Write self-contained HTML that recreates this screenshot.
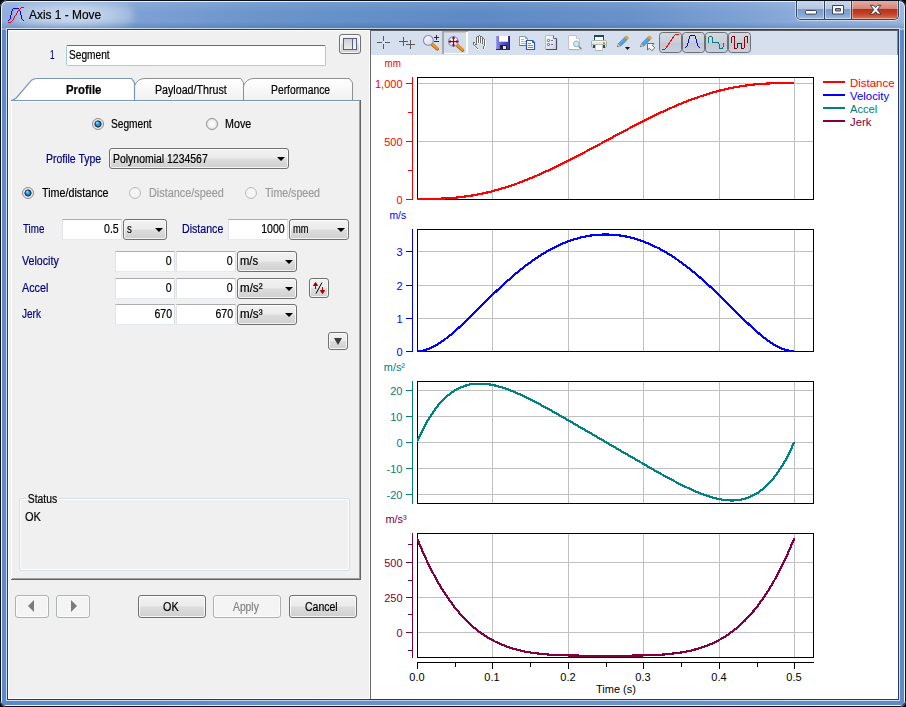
<!DOCTYPE html>
<html><head><meta charset="utf-8"><title>Axis 1 - Move</title>
<style>
*{box-sizing:border-box;margin:0;padding:0}
html,body{width:906px;height:707px;overflow:hidden;background:#000}
body{font-family:"Liberation Sans",sans-serif;font-size:11px;color:#000;position:relative}
.abs,.abs>*{position:absolute}
#frame{position:absolute;left:0;top:0;width:906px;height:707px;border-radius:7px 7px 6px 6px;
 background:linear-gradient(90deg,#93aedb 0,#88a8d7 5%,#7ca0d3 16%,#6c95cc 28%,#6590c8 38%,#5f8ac5 52%,#648ec7 62%,#6992ca 70%,#7ea2d4 82%,#90afdc 90%,#9ab7e0 100%);overflow:hidden}
#frame:before{content:"";position:absolute;left:1px;top:1px;right:1px;bottom:1px;border:1px solid rgba(255,255,255,.85);border-radius:6px 6px 5px 5px}
#frame:after{content:"";position:absolute;left:0;top:0;right:0;bottom:0;border:1px solid #0a0f1c;border-radius:7px 7px 6px 6px}
#sideL,#sideR,#sideB{position:absolute;background:#5d8ac8}
#glow{position:absolute;left:14px;top:2px;width:120px;height:26px;border-radius:13px;background:radial-gradient(ellipse at center,rgba(255,255,255,.62) 0,rgba(255,255,255,.45) 45%,rgba(255,255,255,0) 100%);filter:blur(3px)}
#title{position:absolute;left:29px;top:7px;font-size:14.5px;color:#000;letter-spacing:-0.1px;white-space:nowrap}
#client{position:absolute;left:8px;top:30px;width:890px;height:669px;background:#f0f0f0}
#cborder{position:absolute;left:6px;top:28px;width:894px;height:673px;border:1px solid rgba(255,255,255,.58)}
#cborder2{position:absolute;left:7px;top:29px;width:892px;height:671px;border:1px solid #2b3a57}
.lbl{position:absolute;color:#00007f;white-space:nowrap;line-height:13px}
.blk{color:#000}
.dis{color:#9d9d9d}
.tb{position:absolute;height:21px;background:#fff;border:1px solid #e3e9ef;border-top-color:#abadb3;border-left-color:#e2e3ea;border-right-color:#dbdfe6;text-align:right;padding:2px 3px 0 0;line-height:13px}
.cb{position:absolute;height:21px;border:1px solid #707070;border-radius:3px;background:linear-gradient(#f2f2f2 0,#ebebeb 48%,#dddddd 52%,#cfcfcf 100%);box-shadow:inset 0 0 0 1px rgba(255,255,255,.75);padding:3px 0 0 4px;line-height:13px}
.cb i{position:absolute;right:3px;top:8px;width:0;height:0;border-left:4px solid transparent;border-right:4px solid transparent;border-top:4px solid #000}
.btn{position:absolute;height:23px;border:1px solid #707070;border-radius:3px;background:linear-gradient(#f2f2f2 0,#ebebeb 48%,#dddddd 52%,#cfcfcf 100%);box-shadow:inset 0 0 0 1px rgba(255,255,255,.8);text-align:center;font-size:12px;line-height:20px}
.btn.d{border-color:#adb2b5;background:#f4f4f4;color:#838383;box-shadow:inset 0 0 0 1px #fcfcfc}
.radio{position:absolute;width:12px;height:12px;border-radius:50%;border:1px solid #8a8b8b;background:radial-gradient(circle at 50% 50%,#fefefe 0,#f3f3f3 45%,#d9dadb 100%);box-shadow:inset 0 0 0 1px #ededed}
.radio.on{background:radial-gradient(circle at 42% 38%,rgba(190,240,253,.95) 0,rgba(190,240,253,0) 1.9px),radial-gradient(circle at 50% 50%,#2fa8e8 0,#2290d2 1.6px,#1a5f96 2.3px,#143a5e 2.9px,#143a5e 3.3px,rgba(20,58,94,0) 3.9px),radial-gradient(circle at 50% 50%,#fefefe 0,#f3f3f3 45%,#d9dadb 100%)}
.radio.off{border-color:#bcbcbc;background:#f6f6f6;box-shadow:inset 0 0 0 1px #efefef}
.ct{font-family:"Liberation Sans",sans-serif;font-size:11px}
</style></head><body>
<div id="frame">
 <div style="position:absolute;left:2px;top:2px;right:2px;height:26px;background:linear-gradient(rgba(255,255,255,.10) 0,rgba(255,255,255,0) 40%,rgba(20,60,120,0) 75%,rgba(20,70,130,.22) 100%)"></div>
 <div style="position:absolute;left:2px;top:30px;width:4px;bottom:2px;background:#5d8ac8"></div><div style="position:absolute;right:2px;top:30px;width:4px;bottom:2px;background:#5d8ac8"></div><div style="position:absolute;left:2px;bottom:2px;right:2px;height:4px;background:linear-gradient(90deg,#5b89c7,#6a95ce 60%,#5d8ac8)"></div>
 <div id="glow"></div>
 <svg style="position:absolute;left:0;top:0" width="32" height="30" viewBox="0 0 32 30" shape-rendering="crispEdges"><g fill="#0000ff"><rect x="8" y="20" width="1" height="1"/><rect x="9" y="19" width="1" height="1"/><rect x="10" y="15" width="1" height="4"/><rect x="11" y="11" width="1" height="4"/><rect x="12" y="9" width="1" height="2"/><rect x="13" y="8" width="6" height="1"/><rect x="19" y="9" width="1" height="2"/><rect x="20" y="11" width="1" height="4"/><rect x="21" y="15" width="1" height="4"/><rect x="22" y="19" width="1" height="1"/><rect x="23" y="20" width="1" height="1"/></g><g fill="#ff0000"><rect x="8" y="22" width="3" height="1"/><rect x="11" y="21" width="1" height="1"/><rect x="12" y="20" width="1" height="1"/><rect x="13" y="18" width="1" height="2"/><rect x="14" y="16" width="1" height="2"/><rect x="15" y="15" width="1" height="1"/><rect x="16" y="13" width="1" height="2"/><rect x="17" y="11" width="1" height="2"/><rect x="18" y="10" width="1" height="1"/><rect x="19" y="9" width="1" height="1"/><rect x="20" y="8" width="1" height="1"/><rect x="21" y="7" width="3" height="1"/></g></svg>
 
 <!-- caption buttons -->
 <div style="position:absolute;left:796px;top:0;width:103px;height:20px;border:1px solid #36445e;border-top:none;border-radius:0 0 5px 5px;overflow:hidden;box-shadow:0 0 0 1px rgba(255,255,255,.5)">
  <div style="position:absolute;left:0;top:0;width:28px;height:19px;background:linear-gradient(#cbd9ed 0,#b3c6e2 47%,#7c9ccb 50%,#83a4d2 75%,#9dbde6 100%);border-right:1px solid #36445e;box-shadow:inset 0 0 0 1px rgba(255,255,255,.45)"></div>
  <div style="position:absolute;left:28px;top:0;width:27px;height:19px;background:linear-gradient(#cbd9ed 0,#b3c6e2 47%,#7c9ccb 50%,#83a4d2 75%,#9dbde6 100%);border-right:1px solid #36445e;box-shadow:inset 0 0 0 1px rgba(255,255,255,.45)"></div>
  <div style="position:absolute;left:55px;top:0;width:46px;height:19px;background:linear-gradient(#e6b3aa 0,#d48474 47%,#b8301b 50%,#c4442b 75%,#d9785a 100%);box-shadow:inset 0 0 0 1px rgba(255,255,255,.4)"></div>
  <svg style="position:absolute;left:0;top:0" width="101" height="19" viewBox="797 0 101 19">
   <rect x="805.5" y="10.5" width="11" height="3.6" rx="0.8" fill="#fff" stroke="#3e4658" stroke-width="1"/>
   <path d="M832.5 5.5 H843.5 V14 H832.5Z M835.5 8.5 V11 H840.5 V8.5Z" fill="#fff" fill-rule="evenodd" stroke="#3e4658" stroke-width="1"/>
   <path d="M870.3 5.3 L873.6 5.3 L875.6 7.6 L877.6 5.3 L880.9 5.3 L877.4 9.7 L881 14.1 L877.6 14.1 L875.6 11.8 L873.6 14.1 L870.2 14.1 L873.8 9.7 Z" fill="#fff" stroke="#3f3f48" stroke-width="1" stroke-linejoin="round"/>
  </svg>
 </div>
 <div id="cborder"></div><div id="cborder2"></div>
</div>
<div id="client">
<!-- LEFT PANEL (coords relative to client: subtract 8,30) -->
<div id="left" class="abs" style="left:0;top:0;width:362px;height:669px">
 <div style="left:58px;top:15px;width:260px;height:21px;background:#fff;border:1px solid #a7cbe6;border-top-color:#3d7bad;border-radius:2px"></div>
 <!-- layout button -->
 <div style="left:331px;top:4px;width:22px;height:20px;border:1px solid #707070;border-radius:3px;background:linear-gradient(#f2f2f2 0,#ebebeb 48%,#dddddd 52%,#cfcfcf 100%);box-shadow:inset 0 0 0 1px rgba(255,255,255,.8)"></div>
 <div style="left:335px;top:8px;width:14px;height:12px;border:1px solid #5a6084;background:linear-gradient(#cfcfcf,#ececec)"></div>
 <div style="left:344px;top:9px;width:1px;height:10px;background:#5a6084"></div>
 <div style="left:345px;top:9px;width:3px;height:10px;background:linear-gradient(#e2e2e2,#f6f6f6)"></div>

 <!-- tabs -->
 <svg style="left:0;top:44px" width="362" height="30" viewBox="8 74 362 30">
  <defs><linearGradient id="utab" x1="0" y1="0" x2="0" y2="1"><stop offset="0" stop-color="#ffffff"/><stop offset="1" stop-color="#f1f1f1"/></linearGradient></defs>
  <path d="M243.5 100.5 L243.5 85.8 Q246.5 78.5 254 78.5 L349.5 78.5 L352.5 82.6 L352.5 100.5Z" fill="url(#utab)" stroke="#8f8f8f" stroke-width="1"/>
  <path d="M134.5 100.5 L134.5 85.8 Q137.5 78.5 145 78.5 L240.6 78.5 L243.5 82.6 L243.5 100.5Z" fill="url(#utab)" stroke="#8f8f8f" stroke-width="1"/>
  <path d="M11 100.5 Q14 100.2 16.2 98 L31.6 80.2 Q33.4 78.5 37 78.5 L131.6 78.5 L134.5 82.6 L134.5 100.5Z" fill="#ffffff" stroke="#7a96bc" stroke-width="1.2"/>
 </svg>
 <!-- tab page -->
 <div style="left:3px;top:70px;width:350px;height:480px;background:#f0f0f0;border-left:1px solid #fff"></div>
 <div style="left:3px;top:70px;width:350px;height:1px;background:#7a96bc"></div>
 <div style="left:4px;top:71px;width:347px;height:1px;background:#fcfcfc"></div>
 <div style="left:351px;top:71px;width:1px;height:479px;background:#a0a0a0"></div>
 <div style="left:352px;top:70px;width:1px;height:480px;background:#646464"></div>
 <div style="left:4px;top:548px;width:348px;height:1px;background:#a0a0a0"></div>
 <div style="left:3px;top:549px;width:350px;height:1px;background:#646464"></div>

 <div class="radio on" style="left:84px;top:88px"></div>
 <div class="radio" style="left:198px;top:88px"></div>
 <div class="cb" style="left:101px;top:118px;width:180px"><i></i></div>
 <div class="radio on" style="left:14px;top:157px"></div>
 <div class="radio off" style="left:121px;top:157px"></div>
 <div class="radio off" style="left:237px;top:157px"></div>

 <div class="tb" style="left:54px;top:189px;width:60px"></div>
 <div class="cb" style="left:115px;top:189px;width:44px"><i></i></div>
 <div class="tb" style="left:220px;top:189px;width:60px"></div>
 <div class="cb" style="left:281px;top:189px;width:60px"><i></i></div>

 <div class="tb" style="left:107px;top:221px;width:60px"></div>
 <div class="tb" style="left:168px;top:221px;width:60px"></div>
 <div class="cb" style="left:229px;top:221px;width:60px"><i></i></div>

 <div class="tb" style="left:107px;top:248px;width:60px"></div>
 <div class="tb" style="left:168px;top:248px;width:60px"></div>
 <div class="cb" style="left:229px;top:248px;width:60px"><i></i></div>
 <div class="btn" style="left:301px;top:248px;width:20px;height:20px"></div>
 <svg style="left:301px;top:248px" width="20" height="20" viewBox="0 0 20 20">
  <path d="M13 4.5 L7 15.5" stroke="#000" stroke-width="1" fill="none"/>
  <path d="M6.5 5 L6.5 11 M4.5 7.5 L6.5 4.5 L8.5 7.5Z" stroke="#a00000" fill="#a00000" stroke-width="1"/>
  <path d="M13.5 9 L13.5 15 M11.5 12.5 L13.5 15.5 L15.5 12.5Z" stroke="#a00000" fill="#a00000" stroke-width="1"/>
 </svg>

 <div class="tb" style="left:107px;top:274px;width:60px"></div>
 <div class="tb" style="left:168px;top:274px;width:60px"></div>
 <div class="cb" style="left:229px;top:274px;width:60px"><i></i></div>

 <div class="btn" style="left:320px;top:302px;width:20px;height:18px"></div>
 <div style="left:326px;top:308px;width:0;height:0;border-left:4.5px solid transparent;border-right:4.5px solid transparent;border-top:7px solid #3c3c3c"></div>

 <!-- status group -->
 <div style="left:11px;top:468px;width:331px;height:73px;border:1px solid #d5dfe5;border-radius:3px;box-shadow:inset 0 0 0 1px #fff, 0 0 0 0 #fff"></div>

 <!-- bottom buttons -->
 <div class="btn d" style="left:7px;top:565px;width:34px"></div>
 <div style="left:20px;top:570px;width:0;height:0;border-top:6px solid transparent;border-bottom:6px solid transparent;border-right:6px solid #7b7b7b"></div>
 <div class="btn d" style="left:48px;top:565px;width:34px"></div>
 <div style="left:63px;top:570px;width:0;height:0;border-top:6px solid transparent;border-bottom:6px solid transparent;border-left:6px solid #7b7b7b"></div>
 <div class="btn" style="left:130px;top:565px;width:68px"></div>
 <div class="btn d" style="left:205px;top:565px;width:68px"></div>
 <div class="btn" style="left:281px;top:565px;width:68px"></div>
</div>
<!-- left panel highlight border -->
<div style="position:absolute;left:0;top:0;width:362px;height:669px;border:1px solid #fff;pointer-events:none"></div>
<!-- right panel -->
<div style="position:absolute;left:362px;top:0;width:528px;height:669px;background:#fff;border-left:1px solid #696969;border-top:1px solid #5f5f5f;border-right:1px solid #8c8c8c"></div>
<div id="toolbar" class="abs" style="left:363px;top:1px;width:526px;height:24px;background:#d5dfed;overflow:hidden">
 <svg style="position:absolute;left:0;top:0" width="527" height="24" viewBox="371 31 527 24">
<defs>
 <linearGradient id="gl" x1="0" y1="0" x2="1" y2="1"><stop offset="0" stop-color="#ffffff"/><stop offset="1" stop-color="#d6d6d6"/></linearGradient>
 <linearGradient id="fl" x1="0" y1="0" x2="1" y2="0"><stop offset="0" stop-color="#8c8cec"/><stop offset="0.5" stop-color="#5454c4"/><stop offset="1" stop-color="#3434a0"/></linearGradient>
 <linearGradient id="pg" x1="0" y1="0" x2="1" y2="1"><stop offset="0" stop-color="#ffffff"/><stop offset="1" stop-color="#c9cfdc"/></linearGradient>
 <linearGradient id="tg" x1="0" y1="0" x2="0" y2="1"><stop offset="0" stop-color="#d4d9e2"/><stop offset="0.5" stop-color="#c9cfda"/><stop offset="0.55" stop-color="#c1c8d4"/><stop offset="1" stop-color="#cbd1dc"/></linearGradient>
 <linearGradient id="pen" x1="0" y1="0" x2="1" y2="1"><stop offset="0" stop-color="#7cc0f5"/><stop offset="1" stop-color="#2f7fd0"/></linearGradient>
</defs>
<!-- pressed button -->
<g shape-rendering="crispEdges">
 <rect x="442" y="31" width="26" height="23" fill="#d4ddeb"/>
 <rect x="442" y="31" width="2" height="23" fill="#a6a8ab"/>
 <rect x="442" y="31" width="26" height="1" fill="#a6a8ab"/>
 <rect x="444" y="32" width="22" height="1" fill="#c2c6cc"/>
 <rect x="466" y="32" width="2" height="22" fill="#ffffff"/>
 <rect x="444" y="53" width="24" height="1" fill="#ffffff"/>
</g>
<!-- crosshair 1 -->
<g shape-rendering="crispEdges" fill="#5a5a5a">
 <rect x="377" y="42" width="5" height="1"/><rect x="385" y="42" width="5" height="1"/>
 <rect x="383" y="36" width="1" height="5"/><rect x="383" y="44" width="1" height="5"/>
 <!-- crosshair 2 -->
 <rect x="399" y="41" width="9" height="1"/><rect x="403" y="37" width="1" height="9"/>
 <rect x="406" y="44" width="9" height="1"/><rect x="410" y="40" width="1" height="9"/>
</g>
<!-- magnifier +- -->
<line x1="432.5" y1="44.8" x2="437.4" y2="49" stroke="#a65a12" stroke-width="3.2" stroke-linecap="round"/>
<line x1="432.5" y1="44.4" x2="437.4" y2="48.6" stroke="#f4941c" stroke-width="2.3" stroke-linecap="round"/>
<circle cx="428.4" cy="40.4" r="4.9" fill="url(#gl)" stroke="#8088c8" stroke-width="1.1"/>
<g shape-rendering="crispEdges" fill="#2a2a2a"><rect x="434" y="37" width="5" height="1"/><rect x="436" y="35" width="1" height="5"/><rect x="434" y="41" width="5" height="1"/></g>
<!-- magnifier fit -->
<line x1="457.6" y1="45.8" x2="462.6" y2="50.2" stroke="#a65a12" stroke-width="3.2" stroke-linecap="round"/>
<line x1="457.6" y1="45.4" x2="462.6" y2="49.8" stroke="#f4941c" stroke-width="2.3" stroke-linecap="round"/>
<circle cx="453.4" cy="41.5" r="4.9" fill="#f4f4f8" stroke="#8a90c8" stroke-width="1.1"/>
<g fill="#8b0a0a" stroke="none"><rect x="449.5" y="41" width="8" height="1.2"/><rect x="452.9" y="37.5" width="1.2" height="8"/>
<path d="M453.5 36.3 L455.3 38.6 L451.7 38.6Z M453.5 46.8 L455.3 44.5 L451.7 44.5Z M448.3 41.6 L450.6 39.8 L450.6 43.4Z M458.7 41.6 L456.4 39.8 L456.4 43.4Z"/></g>
<!-- hand -->
<g shape-rendering="crispEdges"><g fill="#ffffff"><rect x="477" y="37" width="1" height="7"/><rect x="479" y="36" width="1" height="7"/><rect x="481" y="37" width="1" height="6"/><rect x="483" y="39" width="1" height="5"/><rect x="485" y="40" width="1" height="6"/><rect x="484" y="46" width="1" height="3"/><rect x="474" y="43" width="1" height="2"/><rect x="474" y="46" width="1" height="1"/><rect x="475" y="47" width="1" height="1"/><rect x="476" y="48" width="1" height="1"/><rect x="477" y="49" width="2" height="1"/></g><g fill="#6a6a6a"><rect x="473" y="42" width="2" height="1"/><rect x="473" y="43" width="1" height="2"/><rect x="474" y="45" width="1" height="1"/><rect x="475" y="46" width="1" height="1"/><rect x="476" y="47" width="1" height="1"/><rect x="477" y="48" width="1" height="1"/><rect x="476" y="37" width="1" height="8"/><rect x="475" y="44" width="1" height="1"/><rect x="477" y="36" width="1" height="1"/><rect x="478" y="36" width="1" height="7"/><rect x="479" y="35" width="1" height="1"/><rect x="480" y="36" width="1" height="7"/><rect x="481" y="36" width="1" height="1"/><rect x="482" y="37" width="1" height="7"/><rect x="483" y="38" width="1" height="1"/><rect x="484" y="39" width="1" height="7"/><rect x="483" y="46" width="1" height="3"/></g></g>
<!-- save -->
<g shape-rendering="crispEdges">
 <rect x="496" y="36" width="14" height="14" fill="url(#fl)"/>
 <rect x="496" y="36" width="1" height="14" fill="#9a9af0"/>
 <rect x="509" y="36" width="1" height="14" fill="#23237a"/>
 <rect x="496" y="49" width="14" height="1" fill="#23237a"/>
 <rect x="499" y="36" width="9" height="6" fill="#ffffff"/>
 <rect x="499" y="41" width="9" height="1" fill="#d4d4e4"/>
 <rect x="500" y="45" width="7" height="4" fill="#1c1c3c"/>
 <rect x="503" y="46" width="3" height="3" fill="#e8e8f0"/>
</g>
<!-- copy -->
<path d="M519.5 36.5 L525.5 36.5 L527.5 38.5 L527.5 45.5 L519.5 45.5Z" fill="#fdfdff" stroke="#8d9bb8" stroke-width="1"/>
<path d="M525.5 36.5 L525.5 38.5 L527.5 38.5" fill="none" stroke="#8d9bb8" stroke-width="1"/>
<g shape-rendering="crispEdges" fill="#8db8ea"><rect x="521" y="39" width="3" height="1"/><rect x="521" y="41" width="5" height="1"/><rect x="521" y="43" width="5" height="1"/></g>
<path d="M519.5 45.5 L527.5 45.5" stroke="#5a6a90" stroke-width="1"/>
<path d="M526.5 40.5 L532.5 40.5 L534.5 42.5 L534.5 49.5 L526.5 49.5Z" fill="#ffffff" stroke="#2b56b4" stroke-width="1.2"/>
<path d="M532.5 40.5 L532.5 42.5 L534.5 42.5" fill="none" stroke="#2b56b4" stroke-width="1"/>
<g shape-rendering="crispEdges" fill="#5a90de"><rect x="528" y="43" width="3" height="1"/><rect x="528" y="45" width="5" height="1"/><rect x="528" y="47" width="5" height="1"/></g>
<!-- properties -->
<path d="M545.5 35.5 L553.5 35.5 L556.5 38.5 L556.5 49.5 L545.5 49.5Z" fill="url(#pg)" stroke="#b4bccc" stroke-width="1"/>
<path d="M553.5 35.5 L553.5 38.5 L556.5 38.5" fill="#e8ecf4" stroke="#5c6a88" stroke-width="1"/>
<path d="M556.5 38.5 L556.5 49.5 L546 49.5" fill="none" stroke="#42506e" stroke-width="1.2"/>
<circle cx="548.5" cy="40.5" r="1.1" fill="none" stroke="#55607a" stroke-width="0.9"/>
<circle cx="548.5" cy="44.5" r="1.1" fill="none" stroke="#55607a" stroke-width="0.9"/>
<g shape-rendering="crispEdges" fill="#6a7690"><rect x="551" y="40" width="2" height="1"/><rect x="551" y="44" width="2" height="1"/></g>
<!-- preview -->
<path d="M568.5 35.5 L576.5 35.5 L579.5 38.5 L579.5 49.5 L568.5 49.5Z" fill="#fbfbfd" stroke="#c2c4ca" stroke-width="1"/>
<path d="M576.5 35.5 L576.5 38.5 L579.5 38.5" fill="#f0f0f4" stroke="#c2c4ca" stroke-width="1"/>
<path d="M569 49.6 L579.5 49.6" stroke="#aeb0b8" stroke-width="1"/>
<line x1="578.7" y1="46.3" x2="581.2" y2="48.7" stroke="#8a8a8a" stroke-width="1.5" stroke-linecap="round"/>
<circle cx="576.4" cy="43.9" r="2.9" fill="#c4e8fb" stroke="#a8acb4" stroke-width="1"/>
<!-- printer -->
<g shape-rendering="crispEdges">
 <rect x="594" y="35" width="10" height="2" fill="#1d4a68"/>
 <rect x="594" y="37" width="1" height="4" fill="#1d4a68"/><rect x="603" y="37" width="1" height="4" fill="#1d4a68"/>
 <rect x="595" y="37" width="8" height="4" fill="#ffffff"/>
</g>
<rect x="591.5" y="40.5" width="15" height="7" rx="1.5" fill="#e4e8e4" stroke="#aab2ac" stroke-width="1"/>
<g shape-rendering="crispEdges">
 <rect x="592" y="41" width="14" height="1" fill="#f6f8f6"/>
 <rect x="592" y="44" width="14" height="1" fill="#b4bcb6"/>
 <rect x="593" y="45" width="2" height="3" fill="#1d4a68"/><rect x="603" y="45" width="2" height="3" fill="#1d4a68"/>
 <rect x="603" y="42" width="2" height="2" fill="#f08a1c"/>
 <rect x="595" y="45" width="8" height="6" fill="#ffffff"/>
 <rect x="595" y="50" width="8" height="1" fill="#a8b0aa"/>
 <rect x="595" y="45" width="1" height="6" fill="#c0c6c0"/><rect x="602" y="45" width="1" height="6" fill="#c0c6c0"/>
</g>
<!-- pencil 1 -->
<g id="pencil">
 <path d="M617.3 46.8 L618.3 43.6 L620.9 46 Z" fill="#e8d8b8" stroke="#8a8478" stroke-width="0.6"/>
 <path d="M617.3 46.8 L617.7 45.6 L618.5 46.4Z" fill="#303030"/>
 <path d="M618.3 43.6 L624.6 37.3 L627.2 39.7 L620.9 46Z" fill="url(#pen)" stroke="#2d78c8" stroke-width="0.5"/>
 <path d="M624.6 37.3 L625.7 36.2 Q626.6 35.6 627.5 36.5 L628.2 37.3 Q628.8 38.2 628.1 38.8 L627.2 39.7Z" fill="#f4a81c" stroke="#d08810" stroke-width="0.5"/>
</g>
<path d="M625 47 L630 47 L627.5 50Z" fill="#111"/>
<!-- pencil 2 -->
<use href="#pencil" x="23" y="0"/>
<path d="M647.5 43.5 L654 43.5 L652.2 45.4 L654.8 47.8 L651.8 50.7 L649.4 48.2 L647.5 50 Z" fill="#ffffff" stroke="#6a6a6a" stroke-width="1" stroke-linejoin="miter"/>
<!-- toggle buttons -->
<g>
 <rect x="659.5" y="32.5" width="22" height="20" rx="3" fill="url(#tg)" stroke="#6c6f76"/>
 <rect x="682.5" y="32.5" width="22" height="20" rx="3" fill="url(#tg)" stroke="#6c6f76"/>
 <rect x="705.5" y="32.5" width="22" height="20" rx="3" fill="url(#tg)" stroke="#6c6f76"/>
 <rect x="728.5" y="32.5" width="22" height="20" rx="3" fill="url(#tg)" stroke="#6c6f76"/>
</g>
<g fill="none" stroke-width="1" shape-rendering="crispEdges">
 <path d="M662 49.5 L664.5 49.5 L666 48 L674 36 L675.5 34.5 L678.5 34.5" stroke="#ff0000"/>
 <path d="M685 48 L687 46 L688.5 41 Q689.5 35.5 691 35.5 L694 35.5 Q695.5 35.5 696.5 41 L698 46 L700 48" stroke="#0000ff"/>
 <path d="M708.5 42.5 L708.5 38 Q708.5 36.5 710.5 36.5 Q712.5 36.5 712.5 38 L712.5 41 Q712.5 42.5 714 42.5 L717.5 42.5 Q719 42.5 719 44 L719 47 Q719 48.5 721 48.5 Q723 48.5 723 47 L723 43" stroke="#008080"/>
 <path d="M731.5 42.5 L731.5 38 Q731.5 36.5 733 36.5 Q734.5 36.5 734.5 38 L734.5 47 Q734.5 48.5 736 48.5 Q737.5 48.5 737.5 47 L737.5 43 L741.5 43 L741.5 47 Q741.5 48.5 743 48.5 Q744.5 48.5 744.5 47 L744.5 38 Q744.5 36.5 746 36.5 Q747.5 36.5 747.5 38 L747.5 42.5" stroke="#8b0000"/>
</g>
</svg>

</div>
</div>
<svg id="chart" width="527" height="644" viewBox="371 55 527 644" style="position:absolute;left:371px;top:55px" shape-rendering="crispEdges">
<rect x="371" y="55" width="527" height="644" fill="#fff"/>
<line x1="492.5" y1="77" x2="492.5" y2="199" stroke="#c0c0c0" stroke-width="1"/>
<line x1="568.5" y1="77" x2="568.5" y2="199" stroke="#c0c0c0" stroke-width="1"/>
<line x1="643.5" y1="77" x2="643.5" y2="199" stroke="#c0c0c0" stroke-width="1"/>
<line x1="719.5" y1="77" x2="719.5" y2="199" stroke="#c0c0c0" stroke-width="1"/>
<line x1="794.5" y1="77" x2="794.5" y2="199" stroke="#c0c0c0" stroke-width="1"/>
<line x1="417" y1="83.5" x2="813" y2="83.5" stroke="#c0c0c0" stroke-width="1"/>
<line x1="417" y1="141.5" x2="813" y2="141.5" stroke="#c0c0c0" stroke-width="1"/>
<rect x="417.5" y="77.5" width="396" height="122" fill="none" stroke="#000" stroke-width="1"/>
<line x1="412.5" y1="77" x2="412.5" y2="200" stroke="#ff0000" stroke-width="1"/>
<line x1="406" y1="83.5" x2="413" y2="83.5" stroke="#ff0000" stroke-width="1"/>
<text x="402.5" y="87.5" text-anchor="end" fill="#ff0000" class="ct">1,000</text>
<line x1="406" y1="141.5" x2="413" y2="141.5" stroke="#ff0000" stroke-width="1"/>
<text x="402.5" y="145.5" text-anchor="end" fill="#ff0000" class="ct">500</text>
<line x1="406" y1="199.5" x2="413" y2="199.5" stroke="#ff0000" stroke-width="1"/>
<text x="402.5" y="203.5" text-anchor="end" fill="#ff0000" class="ct">0</text>
<line x1="408" y1="112.5" x2="413" y2="112.5" stroke="#ff0000" stroke-width="1"/>
<line x1="408" y1="170.5" x2="413" y2="170.5" stroke="#ff0000" stroke-width="1"/>
<text x="384.6" y="67" fill="#ff0000" class="ct" textLength="16.4" lengthAdjust="spacingAndGlyphs">mm</text>
<clipPath id="cp0"><rect x="417" y="77" width="397" height="123"/></clipPath>
<polyline clip-path="url(#cp0)" points="417.0,199.0 420.8,199.0 424.5,199.0 428.3,199.0 432.1,198.9 435.9,198.8 439.6,198.7 443.4,198.5 447.2,198.3 451.0,198.1 454.7,197.7 458.5,197.4 462.3,196.9 466.0,196.4 469.8,195.9 473.6,195.2 477.4,194.6 481.1,193.8 484.9,193.0 488.7,192.1 492.5,191.2 496.2,190.1 500.0,189.1 503.8,187.9 507.6,186.7 511.3,185.5 515.1,184.2 518.9,182.8 522.6,181.4 526.4,179.9 530.2,178.4 534.0,176.8 537.7,175.2 541.5,173.5 545.3,171.8 549.1,170.1 552.8,168.3 556.6,166.5 560.4,164.7 564.1,162.8 567.9,160.9 571.7,159.0 575.5,157.0 579.2,155.1 583.0,153.1 586.8,151.1 590.6,149.1 594.3,147.1 598.1,145.1 601.9,143.0 605.6,141.0 609.4,139.0 613.2,136.9 617.0,134.9 620.7,132.9 624.5,130.9 628.3,128.9 632.1,126.9 635.8,125.0 639.6,123.0 643.4,121.1 647.2,119.2 650.9,117.3 654.7,115.5 658.5,113.7 662.2,111.9 666.0,110.2 669.8,108.5 673.6,106.8 677.3,105.2 681.1,103.6 684.9,102.1 688.7,100.6 692.4,99.2 696.2,97.8 700.0,96.5 703.7,95.3 707.5,94.1 711.3,92.9 715.1,91.9 718.8,90.8 722.6,89.9 726.4,89.0 730.2,88.2 733.9,87.4 737.7,86.8 741.5,86.1 745.3,85.6 749.0,85.1 752.8,84.6 756.6,84.3 760.3,83.9 764.1,83.7 767.9,83.5 771.7,83.3 775.4,83.2 779.2,83.1 783.0,83.0 786.8,83.0 790.5,83.0 794.3,83.0" fill="none" stroke="#ff0000" stroke-width="2.2" stroke-linejoin="round"/>
<line x1="492.5" y1="229" x2="492.5" y2="351" stroke="#c0c0c0" stroke-width="1"/>
<line x1="568.5" y1="229" x2="568.5" y2="351" stroke="#c0c0c0" stroke-width="1"/>
<line x1="643.5" y1="229" x2="643.5" y2="351" stroke="#c0c0c0" stroke-width="1"/>
<line x1="719.5" y1="229" x2="719.5" y2="351" stroke="#c0c0c0" stroke-width="1"/>
<line x1="794.5" y1="229" x2="794.5" y2="351" stroke="#c0c0c0" stroke-width="1"/>
<line x1="417" y1="251.5" x2="813" y2="251.5" stroke="#c0c0c0" stroke-width="1"/>
<line x1="417" y1="285.5" x2="813" y2="285.5" stroke="#c0c0c0" stroke-width="1"/>
<line x1="417" y1="318.5" x2="813" y2="318.5" stroke="#c0c0c0" stroke-width="1"/>
<rect x="417.5" y="229.5" width="396" height="122" fill="none" stroke="#000" stroke-width="1"/>
<line x1="412.5" y1="229" x2="412.5" y2="352" stroke="#0000ff" stroke-width="1"/>
<line x1="406" y1="251.5" x2="413" y2="251.5" stroke="#0000ff" stroke-width="1"/>
<text x="402.5" y="255.5" text-anchor="end" fill="#0000ff" class="ct">3</text>
<line x1="406" y1="285.5" x2="413" y2="285.5" stroke="#0000ff" stroke-width="1"/>
<text x="402.5" y="289.5" text-anchor="end" fill="#0000ff" class="ct">2</text>
<line x1="406" y1="318.5" x2="413" y2="318.5" stroke="#0000ff" stroke-width="1"/>
<text x="402.5" y="322.5" text-anchor="end" fill="#0000ff" class="ct">1</text>
<line x1="406" y1="351.5" x2="413" y2="351.5" stroke="#0000ff" stroke-width="1"/>
<text x="402.5" y="355.5" text-anchor="end" fill="#0000ff" class="ct">0</text>
<text x="389.4" y="219" fill="#0000ff" class="ct" textLength="16.8" lengthAdjust="spacingAndGlyphs">m/s</text>
<clipPath id="cp1"><rect x="417" y="229" width="397" height="123"/></clipPath>
<polyline clip-path="url(#cp1)" points="417.0,351.3 420.8,351.0 424.5,350.3 428.3,349.0 432.1,347.4 435.9,345.4 439.6,343.1 443.4,340.5 447.2,337.6 451.0,334.6 454.7,331.4 458.5,328.0 462.3,324.5 466.0,320.9 469.8,317.3 473.6,313.6 477.4,309.8 481.1,306.1 484.9,302.3 488.7,298.6 492.5,294.9 496.2,291.3 500.0,287.7 503.8,284.2 507.6,280.8 511.3,277.5 515.1,274.2 518.9,271.1 522.6,268.1 526.4,265.2 530.2,262.4 534.0,259.7 537.7,257.1 541.5,254.7 545.3,252.4 549.1,250.3 552.8,248.2 556.6,246.4 560.4,244.6 564.1,243.0 567.9,241.5 571.7,240.2 575.5,239.0 579.2,237.9 583.0,237.0 586.8,236.2 590.6,235.6 594.3,235.1 598.1,234.8 601.9,234.6 605.6,234.5 609.4,234.6 613.2,234.8 617.0,235.1 620.7,235.6 624.5,236.2 628.3,237.0 632.1,237.9 635.8,239.0 639.6,240.2 643.4,241.5 647.2,243.0 650.9,244.6 654.7,246.4 658.5,248.2 662.2,250.3 666.0,252.4 669.8,254.7 673.6,257.1 677.3,259.7 681.1,262.4 684.9,265.2 688.7,268.1 692.4,271.1 696.2,274.2 700.0,277.5 703.7,280.8 707.5,284.2 711.3,287.7 715.1,291.3 718.8,294.9 722.6,298.6 726.4,302.3 730.2,306.1 733.9,309.8 737.7,313.6 741.5,317.3 745.3,320.9 749.0,324.5 752.8,328.0 756.6,331.4 760.3,334.6 764.1,337.6 767.9,340.5 771.7,343.1 775.4,345.4 779.2,347.4 783.0,349.0 786.8,350.3 790.5,351.0 794.3,351.3" fill="none" stroke="#0000ff" stroke-width="2.2" stroke-linejoin="round"/>
<line x1="492.5" y1="381" x2="492.5" y2="503" stroke="#c0c0c0" stroke-width="1"/>
<line x1="568.5" y1="381" x2="568.5" y2="503" stroke="#c0c0c0" stroke-width="1"/>
<line x1="643.5" y1="381" x2="643.5" y2="503" stroke="#c0c0c0" stroke-width="1"/>
<line x1="719.5" y1="381" x2="719.5" y2="503" stroke="#c0c0c0" stroke-width="1"/>
<line x1="794.5" y1="381" x2="794.5" y2="503" stroke="#c0c0c0" stroke-width="1"/>
<line x1="417" y1="390.5" x2="813" y2="390.5" stroke="#c0c0c0" stroke-width="1"/>
<line x1="417" y1="416.5" x2="813" y2="416.5" stroke="#c0c0c0" stroke-width="1"/>
<line x1="417" y1="442.5" x2="813" y2="442.5" stroke="#c0c0c0" stroke-width="1"/>
<line x1="417" y1="468.5" x2="813" y2="468.5" stroke="#c0c0c0" stroke-width="1"/>
<line x1="417" y1="494.5" x2="813" y2="494.5" stroke="#c0c0c0" stroke-width="1"/>
<rect x="417.5" y="381.5" width="396" height="122" fill="none" stroke="#000" stroke-width="1"/>
<line x1="412.5" y1="381" x2="412.5" y2="504" stroke="#008080" stroke-width="1"/>
<line x1="406" y1="390.5" x2="413" y2="390.5" stroke="#008080" stroke-width="1"/>
<text x="402.5" y="394.5" text-anchor="end" fill="#008080" class="ct">20</text>
<line x1="406" y1="416.5" x2="413" y2="416.5" stroke="#008080" stroke-width="1"/>
<text x="402.5" y="420.5" text-anchor="end" fill="#008080" class="ct">10</text>
<line x1="406" y1="442.5" x2="413" y2="442.5" stroke="#008080" stroke-width="1"/>
<text x="402.5" y="446.5" text-anchor="end" fill="#008080" class="ct">0</text>
<line x1="406" y1="468.5" x2="413" y2="468.5" stroke="#008080" stroke-width="1"/>
<text x="402.5" y="472.5" text-anchor="end" fill="#008080" class="ct">-10</text>
<line x1="406" y1="494.5" x2="413" y2="494.5" stroke="#008080" stroke-width="1"/>
<text x="402.5" y="498.5" text-anchor="end" fill="#008080" class="ct">-20</text>
<text x="383.8" y="371" fill="#008080" class="ct" textLength="21.2" lengthAdjust="spacingAndGlyphs">m/s²</text>
<clipPath id="cp2"><rect x="417" y="381" width="397" height="123"/></clipPath>
<polyline clip-path="url(#cp2)" points="417.0,442.0 420.8,433.7 424.5,426.2 428.3,419.6 432.1,413.6 435.9,408.3 439.6,403.6 443.4,399.5 447.2,396.0 451.0,393.0 454.7,390.5 458.5,388.4 462.3,386.8 466.0,385.5 469.8,384.5 473.6,383.9 477.4,383.6 481.1,383.6 484.9,383.8 488.7,384.3 492.5,384.9 496.2,385.8 500.0,386.8 503.8,388.0 507.6,389.3 511.3,390.7 515.1,392.3 518.9,393.9 522.6,395.7 526.4,397.5 530.2,399.3 534.0,401.3 537.7,403.2 541.5,405.3 545.3,407.3 549.1,409.4 552.8,411.5 556.6,413.6 560.4,415.8 564.1,417.9 567.9,420.1 571.7,422.3 575.5,424.5 579.2,426.7 583.0,428.8 586.8,431.0 590.6,433.2 594.3,435.4 598.1,437.6 601.9,439.8 605.6,442.0 609.4,444.2 613.2,446.4 617.0,448.6 620.7,450.8 624.5,453.0 628.3,455.2 632.1,457.3 635.8,459.5 639.6,461.7 643.4,463.9 647.2,466.1 650.9,468.2 654.7,470.4 658.5,472.5 662.2,474.6 666.0,476.7 669.8,478.7 673.6,480.8 677.3,482.7 681.1,484.7 684.9,486.5 688.7,488.3 692.4,490.1 696.2,491.7 700.0,493.3 703.7,494.7 707.5,496.0 711.3,497.2 715.1,498.2 718.8,499.1 722.6,499.7 726.4,500.2 730.2,500.4 733.9,500.4 737.7,500.1 741.5,499.5 745.3,498.5 749.0,497.2 752.8,495.6 756.6,493.5 760.3,491.0 764.1,488.0 767.9,484.5 771.7,480.4 775.4,475.7 779.2,470.4 783.0,464.4 786.8,457.8 790.5,450.3 794.3,442.0" fill="none" stroke="#008080" stroke-width="2.2" stroke-linejoin="round"/>
<line x1="492.5" y1="533" x2="492.5" y2="657" stroke="#c0c0c0" stroke-width="1"/>
<line x1="568.5" y1="533" x2="568.5" y2="657" stroke="#c0c0c0" stroke-width="1"/>
<line x1="643.5" y1="533" x2="643.5" y2="657" stroke="#c0c0c0" stroke-width="1"/>
<line x1="719.5" y1="533" x2="719.5" y2="657" stroke="#c0c0c0" stroke-width="1"/>
<line x1="794.5" y1="533" x2="794.5" y2="657" stroke="#c0c0c0" stroke-width="1"/>
<line x1="417" y1="562.5" x2="813" y2="562.5" stroke="#c0c0c0" stroke-width="1"/>
<line x1="417" y1="597.5" x2="813" y2="597.5" stroke="#c0c0c0" stroke-width="1"/>
<line x1="417" y1="632.5" x2="813" y2="632.5" stroke="#c0c0c0" stroke-width="1"/>
<rect x="417.5" y="533.5" width="396" height="124" fill="none" stroke="#000" stroke-width="1"/>
<line x1="412.5" y1="533" x2="412.5" y2="658" stroke="#800040" stroke-width="1"/>
<line x1="406" y1="562.5" x2="413" y2="562.5" stroke="#800040" stroke-width="1"/>
<text x="402.5" y="566.5" text-anchor="end" fill="#800040" class="ct">500</text>
<line x1="406" y1="597.5" x2="413" y2="597.5" stroke="#800040" stroke-width="1"/>
<text x="402.5" y="601.5" text-anchor="end" fill="#800040" class="ct">250</text>
<line x1="406" y1="632.5" x2="413" y2="632.5" stroke="#800040" stroke-width="1"/>
<text x="402.5" y="636.5" text-anchor="end" fill="#800040" class="ct">0</text>
<line x1="408" y1="544.5" x2="413" y2="544.5" stroke="#800040" stroke-width="1"/>
<line x1="408" y1="580.5" x2="413" y2="580.5" stroke="#800040" stroke-width="1"/>
<line x1="408" y1="614.5" x2="413" y2="614.5" stroke="#800040" stroke-width="1"/>
<line x1="408" y1="650.5" x2="413" y2="650.5" stroke="#800040" stroke-width="1"/>
<text x="385.4" y="523" fill="#800040" class="ct" textLength="21.4" lengthAdjust="spacingAndGlyphs">m/s³</text>
<clipPath id="cp3"><rect x="417" y="533" width="397" height="125"/></clipPath>
<polyline clip-path="url(#cp3)" points="417.0,538.2 420.8,547.3 424.5,555.8 428.3,563.8 432.1,571.4 435.9,578.4 439.6,585.0 443.4,591.2 447.2,596.9 451.0,602.3 454.7,607.3 458.5,611.9 462.3,616.2 466.0,620.2 469.8,623.8 473.6,627.2 477.4,630.3 481.1,633.1 484.9,635.7 488.7,638.0 492.5,640.2 496.2,642.1 500.0,643.9 503.8,645.4 507.6,646.8 511.3,648.1 515.1,649.2 518.9,650.2 522.6,651.1 526.4,651.8 530.2,652.5 534.0,653.0 537.7,653.5 541.5,653.9 545.3,654.3 549.1,654.6 552.8,654.8 556.6,655.0 560.4,655.2 564.1,655.3 567.9,655.4 571.7,655.5 575.5,655.5 579.2,655.6 583.0,655.6 586.8,655.6 590.6,655.6 594.3,655.6 598.1,655.6 601.9,655.6 605.6,655.6 609.4,655.6 613.2,655.6 617.0,655.6 620.7,655.6 624.5,655.6 628.3,655.6 632.1,655.6 635.8,655.5 639.6,655.5 643.4,655.4 647.2,655.3 650.9,655.2 654.7,655.0 658.5,654.8 662.2,654.6 666.0,654.3 669.8,653.9 673.6,653.5 677.3,653.0 681.1,652.5 684.9,651.8 688.7,651.1 692.4,650.2 696.2,649.2 700.0,648.1 703.7,646.8 707.5,645.4 711.3,643.9 715.1,642.1 718.8,640.2 722.6,638.0 726.4,635.7 730.2,633.1 733.9,630.3 737.7,627.2 741.5,623.8 745.3,620.2 749.0,616.2 752.8,611.9 756.6,607.3 760.3,602.3 764.1,596.9 767.9,591.2 771.7,585.0 775.4,578.4 779.2,571.4 783.0,563.8 786.8,555.8 790.5,547.3 794.3,538.2" fill="none" stroke="#800040" stroke-width="2.2" stroke-linejoin="round"/>
<line x1="417" y1="662.5" x2="814" y2="662.5" stroke="#000"/>
<line x1="417.5" y1="662" x2="417.5" y2="669" stroke="#000"/>
<text x="417" y="681" text-anchor="middle" fill="#000" class="ct">0.0</text>
<line x1="455.5" y1="662" x2="455.5" y2="667" stroke="#000"/>
<line x1="492.5" y1="662" x2="492.5" y2="669" stroke="#000"/>
<text x="492" y="681" text-anchor="middle" fill="#000" class="ct">0.1</text>
<line x1="530.5" y1="662" x2="530.5" y2="667" stroke="#000"/>
<line x1="568.5" y1="662" x2="568.5" y2="669" stroke="#000"/>
<text x="568" y="681" text-anchor="middle" fill="#000" class="ct">0.2</text>
<line x1="606.5" y1="662" x2="606.5" y2="667" stroke="#000"/>
<line x1="643.5" y1="662" x2="643.5" y2="669" stroke="#000"/>
<text x="643" y="681" text-anchor="middle" fill="#000" class="ct">0.3</text>
<line x1="681.5" y1="662" x2="681.5" y2="667" stroke="#000"/>
<line x1="719.5" y1="662" x2="719.5" y2="669" stroke="#000"/>
<text x="719" y="681" text-anchor="middle" fill="#000" class="ct">0.4</text>
<line x1="757.5" y1="662" x2="757.5" y2="667" stroke="#000"/>
<line x1="794.5" y1="662" x2="794.5" y2="669" stroke="#000"/>
<text x="794" y="681" text-anchor="middle" fill="#000" class="ct">0.5</text>
<text x="616" y="693" text-anchor="middle" fill="#000" class="ct">Time (s)</text>
<line x1="823" y1="82" x2="845" y2="82" stroke="#ff0000" stroke-width="2"/>
<text x="850" y="87" fill="#ff0000" class="ct" textLength="44.6" lengthAdjust="spacingAndGlyphs">Distance</text>
<line x1="823" y1="95" x2="845" y2="95" stroke="#0000ff" stroke-width="2"/>
<text x="850" y="100" fill="#0000ff" class="ct" textLength="39.2" lengthAdjust="spacingAndGlyphs">Velocity</text>
<line x1="823" y1="108" x2="845" y2="108" stroke="#008080" stroke-width="2"/>
<text x="850" y="113" fill="#008080" class="ct" textLength="27.3" lengthAdjust="spacingAndGlyphs">Accel</text>
<line x1="823" y1="121" x2="845" y2="121" stroke="#800040" stroke-width="2"/>
<text x="850" y="126" fill="#800040" class="ct" textLength="21.3" lengthAdjust="spacingAndGlyphs">Jerk</text>
</svg>
<div id="labels" style="position:absolute;left:0;top:0;width:906px;height:707px"><div style="position:absolute;-webkit-text-stroke:0.2px #000;top:8.27px;line-height:14px;font-size:12.5px;color:#000;white-space:nowrap;left:29.30px;transform-origin:0 0;transform:scaleX(0.9536);">Axis 1 - Move</div>
<div style="position:absolute;-webkit-text-stroke:0.2px #00007f;top:47.84px;line-height:14px;font-size:12px;color:#00007f;white-space:nowrap;left:50.00px;transform-origin:0 0;transform:scaleX(0.6743);">1</div>
<div style="position:absolute;-webkit-text-stroke:0.2px #000;top:47.84px;line-height:14px;font-size:12px;color:#000;white-space:nowrap;left:69.30px;transform-origin:0 0;transform:scaleX(0.8474);">Segment</div>
<div style="position:absolute;-webkit-text-stroke:0.2px #000;top:83.44px;line-height:14px;font-size:12px;color:#000;white-space:nowrap;font-weight:bold;left:65.60px;transform-origin:0 0;transform:scaleX(0.9480);">Profile</div>
<div style="position:absolute;-webkit-text-stroke:0.2px #000;top:82.84px;line-height:14px;font-size:12px;color:#000;white-space:nowrap;left:155.30px;transform-origin:0 0;transform:scaleX(0.8884);">Payload/Thrust</div>
<div style="position:absolute;-webkit-text-stroke:0.2px #000;top:82.84px;line-height:14px;font-size:12px;color:#000;white-space:nowrap;left:271.20px;transform-origin:0 0;transform:scaleX(0.8603);">Performance</div>
<div style="position:absolute;-webkit-text-stroke:0.2px #000;top:116.84px;line-height:14px;font-size:12px;color:#000;white-space:nowrap;left:111.30px;transform-origin:0 0;transform:scaleX(0.8474);">Segment</div>
<div style="position:absolute;-webkit-text-stroke:0.2px #000;top:116.84px;line-height:14px;font-size:12px;color:#000;white-space:nowrap;left:225.40px;transform-origin:0 0;transform:scaleX(0.8928);">Move</div>
<div style="position:absolute;-webkit-text-stroke:0.2px #00007f;top:151.84px;line-height:14px;font-size:12px;color:#00007f;white-space:nowrap;left:46.30px;transform-origin:0 0;transform:scaleX(0.8725);">Profile Type</div>
<div style="position:absolute;-webkit-text-stroke:0.2px #000;top:151.84px;line-height:14px;font-size:12px;color:#000;white-space:nowrap;left:113.30px;transform-origin:0 0;transform:scaleX(0.8708);">Polynomial 1234567</div>
<div style="position:absolute;-webkit-text-stroke:0.2px #000;top:185.84px;line-height:14px;font-size:12px;color:#000;white-space:nowrap;left:41.80px;transform-origin:0 0;transform:scaleX(0.8956);">Time/distance</div>
<div style="position:absolute;-webkit-text-stroke:0.2px #9b9b9b;top:185.84px;line-height:14px;font-size:12px;color:#9b9b9b;white-space:nowrap;left:148.50px;transform-origin:0 0;transform:scaleX(0.9055);">Distance/speed</div>
<div style="position:absolute;-webkit-text-stroke:0.2px #9b9b9b;top:185.84px;line-height:14px;font-size:12px;color:#9b9b9b;white-space:nowrap;left:265.00px;transform-origin:0 0;transform:scaleX(0.8835);">Time/speed</div>
<div style="position:absolute;-webkit-text-stroke:0.2px #00007f;top:221.84px;line-height:14px;font-size:12px;color:#00007f;white-space:nowrap;left:22.90px;transform-origin:0 0;transform:scaleX(0.8123);">Time</div>
<div style="position:absolute;-webkit-text-stroke:0.2px #000;top:221.84px;line-height:14px;font-size:12px;color:#000;white-space:nowrap;right:787.00px;transform-origin:100% 0;transform:scaleX(0.8800);">0.5</div>
<div style="position:absolute;-webkit-text-stroke:0.2px #000;top:221.84px;line-height:14px;font-size:12px;color:#000;white-space:nowrap;left:126.80px;transform-origin:0 0;transform:scaleX(0.8000);">s</div>
<div style="position:absolute;-webkit-text-stroke:0.2px #00007f;top:221.84px;line-height:14px;font-size:12px;color:#00007f;white-space:nowrap;left:182.10px;transform-origin:0 0;transform:scaleX(0.8846);">Distance</div>
<div style="position:absolute;-webkit-text-stroke:0.2px #000;top:221.84px;line-height:14px;font-size:12px;color:#000;white-space:nowrap;right:621.00px;transform-origin:100% 0;transform:scaleX(0.8800);">1000</div>
<div style="position:absolute;-webkit-text-stroke:0.2px #000;top:221.84px;line-height:14px;font-size:12px;color:#000;white-space:nowrap;left:292.70px;transform-origin:0 0;transform:scaleX(0.7753);">mm</div>
<div style="position:absolute;-webkit-text-stroke:0.2px #00007f;top:253.84px;line-height:14px;font-size:12px;color:#00007f;white-space:nowrap;left:21.90px;transform-origin:0 0;transform:scaleX(0.8898);">Velocity</div>
<div style="position:absolute;-webkit-text-stroke:0.2px #000;top:253.84px;line-height:14px;font-size:12px;color:#000;white-space:nowrap;right:734.00px;transform-origin:100% 0;transform:scaleX(0.8800);">0</div>
<div style="position:absolute;-webkit-text-stroke:0.2px #000;top:253.84px;line-height:14px;font-size:12px;color:#000;white-space:nowrap;right:673.00px;transform-origin:100% 0;transform:scaleX(0.8800);">0</div>
<div style="position:absolute;-webkit-text-stroke:0.2px #000;top:253.84px;line-height:14px;font-size:12px;color:#000;white-space:nowrap;left:240.40px;transform-origin:0 0;transform:scaleX(0.9364);">m/s</div>
<div style="position:absolute;-webkit-text-stroke:0.2px #00007f;top:280.84px;line-height:14px;font-size:12px;color:#00007f;white-space:nowrap;left:21.90px;transform-origin:0 0;transform:scaleX(0.8997);">Accel</div>
<div style="position:absolute;-webkit-text-stroke:0.2px #000;top:280.84px;line-height:14px;font-size:12px;color:#000;white-space:nowrap;right:734.00px;transform-origin:100% 0;transform:scaleX(0.8800);">0</div>
<div style="position:absolute;-webkit-text-stroke:0.2px #000;top:280.84px;line-height:14px;font-size:12px;color:#000;white-space:nowrap;right:673.00px;transform-origin:100% 0;transform:scaleX(0.8800);">0</div>
<div style="position:absolute;-webkit-text-stroke:0.2px #000;top:280.84px;line-height:14px;font-size:12px;color:#000;white-space:nowrap;left:240.40px;transform-origin:0 0;transform:scaleX(0.9646);">m/s²</div>
<div style="position:absolute;-webkit-text-stroke:0.2px #00007f;top:306.84px;line-height:14px;font-size:12px;color:#00007f;white-space:nowrap;left:21.90px;transform-origin:0 0;transform:scaleX(0.8337);">Jerk</div>
<div style="position:absolute;-webkit-text-stroke:0.2px #000;top:306.84px;line-height:14px;font-size:12px;color:#000;white-space:nowrap;right:734.00px;transform-origin:100% 0;transform:scaleX(0.8800);">670</div>
<div style="position:absolute;-webkit-text-stroke:0.2px #000;top:306.84px;line-height:14px;font-size:12px;color:#000;white-space:nowrap;right:673.00px;transform-origin:100% 0;transform:scaleX(0.8800);">670</div>
<div style="position:absolute;-webkit-text-stroke:0.2px #000;top:306.84px;line-height:14px;font-size:12px;color:#000;white-space:nowrap;left:240.40px;transform-origin:0 0;transform:scaleX(0.9646);">m/s³</div>
<div style="position:absolute;-webkit-text-stroke:0.2px #000;top:491.84px;line-height:14px;font-size:12px;color:#000;white-space:nowrap;left:28.20px;transform-origin:0 0;transform:scaleX(0.8642);background:#f0f0f0;padding:0 2px;margin-left:-2px;">Status</div>
<div style="position:absolute;-webkit-text-stroke:0.2px #000;top:509.84px;line-height:14px;font-size:12px;color:#000;white-space:nowrap;left:25.30px;transform-origin:0 0;transform:scaleX(0.9171);">OK</div>
<div style="position:absolute;-webkit-text-stroke:0.2px #000;top:599.84px;line-height:14px;font-size:12px;color:#000;white-space:nowrap;left:163.30px;transform-origin:0 0;transform:scaleX(0.8998);">OK</div>
<div style="position:absolute;-webkit-text-stroke:0.2px #838383;top:599.84px;line-height:14px;font-size:12px;color:#838383;white-space:nowrap;left:232.70px;transform-origin:0 0;transform:scaleX(0.8595);">Apply</div>
<div style="position:absolute;-webkit-text-stroke:0.2px #000;top:599.84px;line-height:14px;font-size:12px;color:#000;white-space:nowrap;left:305.40px;transform-origin:0 0;transform:scaleX(0.8754);">Cancel</div></div>
</body></html>
